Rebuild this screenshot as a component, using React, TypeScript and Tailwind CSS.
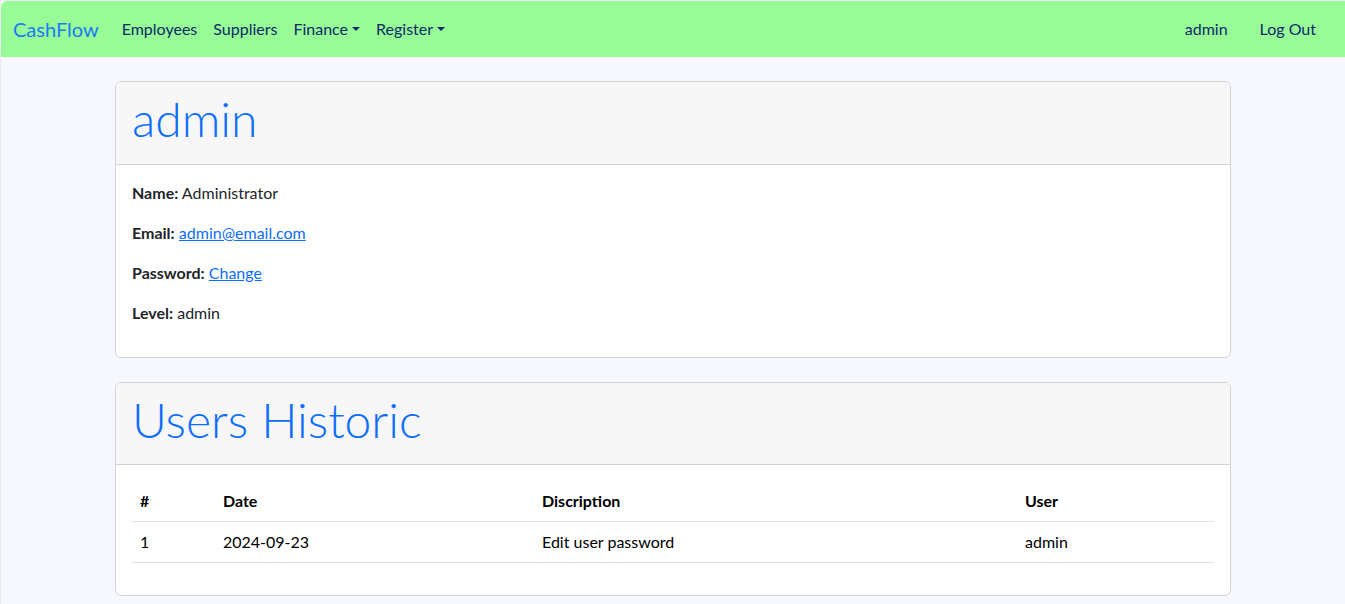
import React from "react"

const navLinks = [
  { id: 1, label: "Employees", caret: false },
  { id: 2, label: "Suppliers", caret: false },
  { id: 3, label: "Finance", caret: true },
  { id: 4, label: "Register", caret: true },
]

const history = [
  { id: 1, date: "2024-09-23", description: "Edit user password", user: "admin" },
]

const Caret = () => (
  <span className="ml-[4px] inline-block h-0 w-0 border-x-[4.8px] border-t-[4.8px] border-x-transparent border-t-current align-[3px]"></span>
)

const Navbar = () => {
  return (
    <nav className="flex h-[56px] items-center justify-between bg-[#98fb98] pl-[12px] pr-[21px] rounded-tl-[6px]">
      <div className="flex items-center">
        <a href="#" className="mr-[15px] py-[5px] text-[20px] leading-[30px] text-[#1a7cf5]">
          CashFlow
        </a>
        <ul className="flex items-center">
          {navLinks.map((link) => (
            <li key={link.id}>
              <a href="#" className="flex items-center px-[8px] py-[8px] text-[16px] leading-[24px] text-[#0a2a66]">
                {link.label}
                {link.caret && <Caret />}
              </a>
            </li>
          ))}
        </ul>
      </div>
      <ul className="flex items-center gap-[16px]">
        <li>
          <a href="#" className="block px-[8px] py-[8px] leading-[24px] text-[#0a2a66]">admin</a>
        </li>
        <li>
          <a href="#" className="block px-[8px] py-[8px] leading-[24px] text-[#0a2a66]">Log Out</a>
        </li>
      </ul>
    </nav>
  )
}

const Card = ({ title, children }: { title: string; children: React.ReactNode }) => (
  <div className="overflow-hidden rounded-[6px] border border-[#d3d3d5] bg-white">
    <div className="border-b border-[#d3d3d5] bg-[#f7f7f7] px-[16px] pt-[8px] pb-[8px]">
      <h1 className="mb-[8px] text-[48px] font-light leading-[57.6px] text-[#0d6efd]">{title}</h1>
    </div>
    <div className="p-[16px]">{children}</div>
  </div>
)

const App = () => {
  return (
    <div
      className="min-h-screen border-t border-l border-[#e9ecef] bg-[#f7f8fd] text-[16px] text-[#212529]"
      style={{ fontFamily: "Lato, 'Segoe UI', 'Noto Sans', sans-serif" }}
    >
      <Navbar />
      <main className="mx-auto mt-[24px] w-[1140px] px-[12px]">
        <Card title="admin">
          <p className="mb-[16px] leading-[24px]">
            <b>Name:</b> Administrator
          </p>
          <p className="mb-[16px] leading-[24px]">
            <b>Email:</b>{" "}
            <a href="#" className="text-[#0d6efd] underline">admin@email.com</a>
          </p>
          <p className="mb-[16px] leading-[24px]">
            <b>Password:</b>{" "}
            <a href="#" className="text-[#0d6efd] underline">Change</a>
          </p>
          <p className="mb-[16px] leading-[24px]">
            <b>Level:</b> admin
          </p>
        </Card>
        <div className="mt-[24px]">
          <Card title="Users Historic">
            <table className="mb-[16px] w-full table-fixed border-collapse text-left text-black">
              <thead>
                <tr className="border-b border-[#dee2e6]">
                  <th className="w-[83px] p-[8px] font-bold leading-[24px]">#</th>
                  <th className="w-[319px] p-[8px] font-bold leading-[24px]">Date</th>
                  <th className="w-[483px] p-[8px] font-bold leading-[24px]">Discription</th>
                  <th className="p-[8px] font-bold leading-[24px]">User</th>
                </tr>
              </thead>
              <tbody>
                {history.map((row) => (
                  <tr key={row.id} className="border-b border-[#dee2e6]">
                    <td className="p-[8px] leading-[24px]">{row.id}</td>
                    <td className="p-[8px] leading-[24px]">{row.date}</td>
                    <td className="p-[8px] leading-[24px]">{row.description}</td>
                    <td className="p-[8px] leading-[24px]">{row.user}</td>
                  </tr>
                ))}
              </tbody>
            </table>
          </Card>
        </div>
      </main>
    </div>
  )
}

export default App
